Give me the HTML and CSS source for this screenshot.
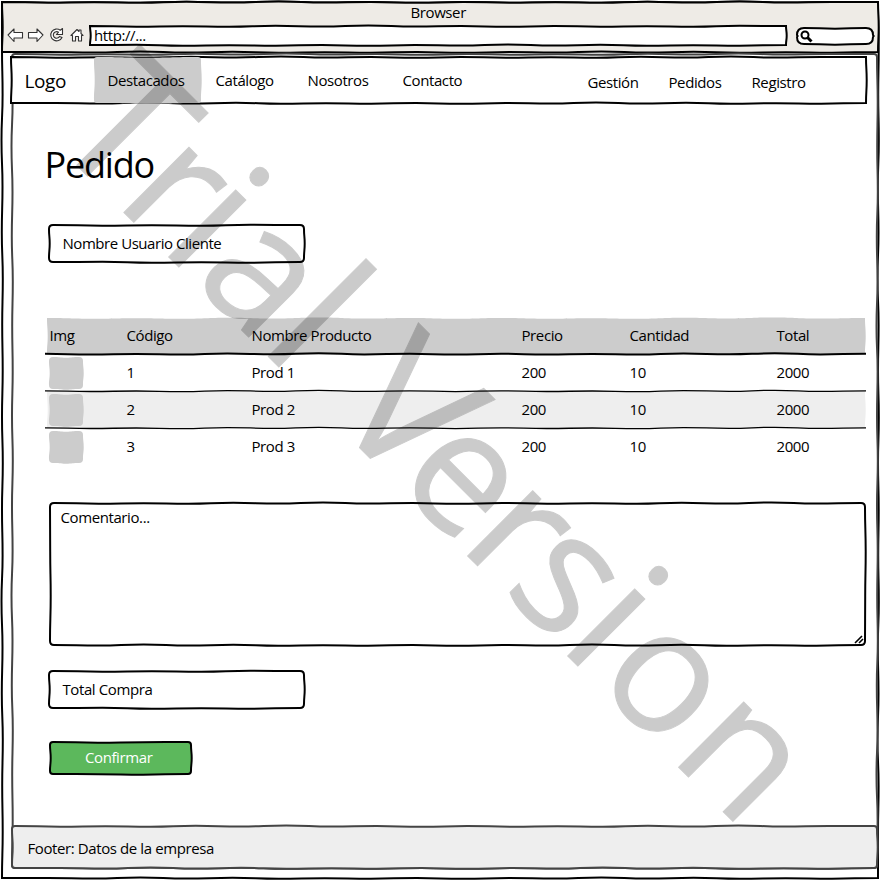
FILE: index.html
```
<!DOCTYPE html>
<html lang="es">
<head>
<meta charset="utf-8">
<title>Pedido</title>
<link rel="stylesheet" href="styles.css">
</head>
<body>
<div class="browser sketch">
  <header class="chrome sketch">
    <div class="chrome-title">Browser</div>
    <div class="toolbar">
      <svg class="tools" width="80" height="18" viewBox="0 0 80 18" aria-hidden="true">
        <path d="M1 9l6-6v3.500h8.500v5.500H7v3.500z"/>
        <path d="M36 9l-6-6v3.500h-8.500v5.500H30v3.500z"/>
        <path d="M53.300 4.300A5.900 5.900 0 1 0 55 11.500L52.500 10.500A3.300 3.300 0 1 1 51.500 6.200L49.500 8.500H55.500V2.500z"/>
        <path d="M64 9.500L70 3.500L72 5.500V4h2v3.500l2 2H74.500V15H71.500V10.500H68.500V15H65.500V9.500z"/>
      </svg>
      <div class="url sketch">http://...</div>
      <div class="search sketch">
        <svg class="lens" width="14" height="14" viewBox="0 0 14 14" aria-hidden="true"><circle cx="5" cy="5" r="3.500"/><path d="M7.500 7.500l4 4" stroke-width="3"/></svg>
      </div>
    </div>
  </header>
  <main class="page sketch">
    <nav class="nav sketch">
      <a class="logo">Logo</a>
      <a class="item active sketch">Destacados</a>
      <a class="item catalogo">Catálogo</a>
      <a class="item nosotros">Nosotros</a>
      <a class="item contacto">Contacto</a>
      <div class="nav-right"><a class="gestion">Gestión</a><a class="pedidos">Pedidos</a><a>Registro</a></div>
    </nav>
    <section class="content">
      <h1>Pedido</h1>
      <div class="field sketch"><span class="cliente">Nombre Usuario Cliente</span></div>
      <div class="table">
        <div class="row head sketch"><span>Img</span><span>Código</span><span>Nombre Producto</span><span>Precio</span><span>Cantidad</span><span>Total</span></div>
        <div class="row sketch"><i class="thumb sketch"></i><span>1</span><span>Prod 1</span><span>200</span><span>10</span><span>2000</span></div>
        <div class="row alt sketch"><i class="thumb sketch"></i><span>2</span><span>Prod 2</span><span>200</span><span>10</span><span>2000</span></div>
        <div class="row last"><i class="thumb sketch"></i><span>3</span><span>Prod 3</span><span>200</span><span>10</span><span>2000</span></div>
      </div>
      <div class="comment sketch">Comentario...
        <svg class="grip" width="12" height="12" viewBox="0 0 12 12" aria-hidden="true"><path d="M2 10l7-7M6 10l4-4"/></svg>
      </div>
      <div class="field total sketch"><span>Total Compra</span></div>
      <div class="button sketch">Confirmar</div>
    </section>
    <footer class="footer sketch">Footer: Datos de la empresa</footer>
  </main>
  <svg class="watermark" width="880" height="880" viewBox="0 0 880 880">
    <text transform="rotate(45)" y="62.500" x="128.700 223 285.900 332.700 426.200 470 524.200 618 709 771 850.200 900 1007.700"><tspan class="tall">T</tspan>r<tspan class="dotted">i</tspan>a<tspan class="tall">l</tspan> <tspan class="tall">V</tspan>ers<tspan class="dotted">i</tspan>on</text>
  </svg>
</div>
<script src="sketch.js"></script>
</body>
</html>
```
FILE: styles.css
```
* { box-sizing: border-box; }
body {
  margin: 0;
  background: #fff;
  color: #000;
  font: 15px/20px "Open Sans", "Noto Sans", sans-serif;
  letter-spacing: -0.4px;
}
.sketch {
  position: relative;
  isolation: isolate;
  --fill: #fff;
  --stroke: #000;
  --weight: 2;
  --radius: 0;
}
.outline {
  position: absolute;
  inset: 0;
  width: 100%;
  height: 100%;
  overflow: visible;
  z-index: -1;
}
.browser {
  width: 880px;
  height: 880px;
  padding: 2px;
}
.browser > .outline { inset: 2px; width: 876px; height: 876px; }
.chrome {
  --fill: #eeebe6;
  height: 50px;
}
.chrome-title {
  height: 24px;
  padding-left: 408.5px;
  line-height: 20px;
}
.toolbar { display: flex; }
.tools {
  margin: 0 3px 0 5px;
  fill: #fff;
  stroke: #333;
  stroke-width: 1.1;
  stroke-linejoin: round;
}
.url {
  width: 696px;
  height: 19px;
  padding-left: 4px;
  line-height: 19px;
  letter-spacing: -0.4px;
}
.search {
  --radius: 7;
  width: 76px;
  height: 16px;
  margin: 2px 0 0 11px;
}
.lens {
  display: block;
  margin: 2px 0 0 3px;
  fill: none;
  stroke: #000;
  stroke-width: 2;
}
.page {
  --stroke: #444;
  --radius: 3;
  display: flex;
  flex-direction: column;
  width: 865px;
  height: 814px;
  margin: 2px 0 0 10px;
}
.nav {
  display: flex;
  width: 855px;
  height: 46px;
  margin: 3px 0 0 -1px;
  line-height: 46px;
}
.logo { width: 83px; padding-left: 13.5px; font-size: 19px; line-height: 49px; }
.active {
  --fill: #ccc;
  --stroke: #ccc;
  --weight: 0;
  --radius: 3;
  width: 107px;
  padding-left: 13.5px;
}
.catalogo { width: 92px; margin-left: 14.5px; }
.nosotros { width: 95px; }
.contacto { width: 185px; }
.nav-right { display: flex; line-height: 50px; }
.gestion { width: 81px; }
.pedidos { width: 83px; }
.content { flex: 1; padding: 37px 0 0 38px; }
h1 {
  height: 52px;
  margin: 0 0 33px -5.5px;
  font-size: 36px;
  line-height: 50px;
  font-weight: 400;
  letter-spacing: -1.2px;
}
.field {
  --radius: 4;
  width: 255px;
  height: 37px;
  margin-left: -1px;
  padding-left: 13.5px;
  line-height: 37px;
}
.cliente { letter-spacing: -0.45px; }
.table { width: 818px; margin: 56px 0 0 -3px; }
.row {
  --weight: 1.3;
  z-index: 2;
  display: grid;
  grid-template-columns: 77px 125px 270px 108px 147px 1fr;
  height: 37px;
  padding-left: 2.5px;
  line-height: 36px;
}
.head { --fill: #ccc; --weight: 2; z-index: 3; height: 36px; line-height: 34px; }
.alt { --fill: #eee; z-index: 1; }
.last { z-index: 0; }
.thumb {
  --fill: #ccc;
  --weight: 0;
  --radius: 4;
  width: 34px;
  height: 32px;
  margin: 3px 0 0 -1px;
}
.comment {
  --radius: 4;
  width: 815px;
  height: 142px;
  margin: 38px 0 0;
  padding: 4px 0 0 10.5px;
}
.grip {
  position: absolute;
  right: 0;
  bottom: 0;
  fill: none;
  stroke: #000;
  stroke-width: 1.6;
}
.total { margin-top: 26px; }
.button {
  --fill: #5cb85c;
  --radius: 3;
  width: 141px;
  height: 32px;
  margin-top: 34px;
  padding-left: 35px;
  color: #fff;
  line-height: 31px;
}
.footer {
  --fill: #eee;
  --stroke: #444;
  --radius: 3;
  height: 42px;
  padding-left: 15.5px;
  line-height: 45px;
}
.watermark {
  position: absolute;
  inset: 0;
  z-index: 5;
  overflow: visible;
  fill: #000;
  stroke: #000;
  stroke-width: 1;
  opacity: 0.2;
  font-size: 172px;
  letter-spacing: 0;
  pointer-events: none;
}
.tall { font-size: 182px; }
.dotted { font-size: 177px; }
```
FILE: sketch.js
```
// Draws a hand-drawn outline behind every .sketch element.
const NS = "http://www.w3.org/2000/svg";
const WAVE = [0, 0.7, 0.2, 0.8, -0.2, 0.5, -0.5, 0.6, 0, 0.8];

function side(x1, y1, x2, y2) {
  const length = Math.hypot(x2 - x1, y2 - y1);
  const count = Math.max(2, Math.round(length / 45));
  const nx = (y2 - y1) / length, ny = (x2 - x1) / length;
  let d = "";
  for (let i = 1; i <= count; i++) {
    const at = (k) => {
      const t = k / count;
      const w = k >= count ? 0 : WAVE[Math.floor(k) % WAVE.length];
      return [x1 + (x2 - x1) * t + Math.abs(nx) * w, y1 + (y2 - y1) * t + Math.abs(ny) * w];
    };
    const a = at(i - 1), b = at(i);
    const cx = (a[0] + b[0]) / 2, cy = (a[1] + b[1]) / 2;
    const horizontal = Math.abs(ny) > 0.5;
    d += horizontal
      ? `C${cx} ${a[1]} ${cx} ${b[1]} ${b[0]} ${b[1]}`
      : `C${a[0]} ${cy} ${b[0]} ${cy} ${b[0]} ${b[1]}`;
  }
  return d;
}

function add(svg, d, fill, stroke, weight) {
  const path = document.createElementNS(NS, "path");
  path.setAttribute("d", d);
  path.setAttribute("fill", fill);
  path.setAttribute("stroke", stroke);
  path.setAttribute("stroke-width", weight);
  svg.append(path);
}

for (const box of document.querySelectorAll(".sketch")) {
  const style = getComputedStyle(box);
  const value = (name) => style.getPropertyValue(name).trim();
  const svg = document.createElementNS(NS, "svg");
  svg.setAttribute("class", "outline");
  box.append(svg);
  const w = svg.clientWidth || svg.getBoundingClientRect().width;
  const h = svg.clientHeight || svg.getBoundingClientRect().height;
  const r = Number(value("--radius"));
  const fill = value("--fill"), stroke = value("--stroke"), weight = Number(value("--weight"));
  const shape = `M${r} 0` + side(r, 0, w - r, 0) + `Q${w} 0 ${w} ${r}` + side(w, r, w, h - r)
    + `Q${w} ${h} ${w - r} ${h}` + side(w - r, h, r, h) + `Q0 ${h} 0 ${h - r}` + side(0, h - r, 0, r) + `Q0 0 ${r} 0Z`;
  if (box.classList.contains("row")) {
    add(svg, shape, fill, "none", 0);
    add(svg, `M-2 ${h - 0.2}` + side(-2, h - 0.2, w + 1, h - 0.2), "none", stroke, weight);
  } else {
    add(svg, shape, fill, weight ? stroke : "none", weight);
  }
}
```
